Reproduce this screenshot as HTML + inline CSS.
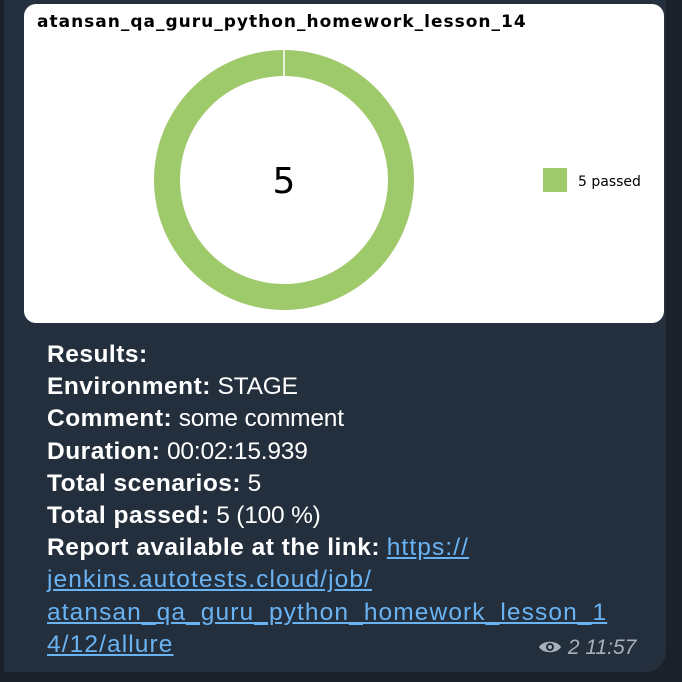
<!DOCTYPE html>
<html><head><style>
body{margin:0;width:682px;height:682px;background:#1a212b;overflow:hidden;font-family:"Liberation Sans",sans-serif}
.bub{position:absolute;left:4px;top:0;width:662px;height:672px;background:#242f3d;border-radius:0 0 20px 0}
.img{position:absolute;left:24px;top:4px;width:640px;height:319px;background:#fff;border-radius:12px;overflow:hidden}
.title{position:absolute;left:13px;top:8px;font-size:17px;font-weight:bold;color:#000;font-family:"DejaVu Sans",sans-serif;letter-spacing:1px}
.txt{position:absolute;left:47px;top:339px;color:#fff;font-size:24.5px;line-height:32.2px;white-space:nowrap;letter-spacing:-0.2px}
b{font-weight:bold;letter-spacing:0.5px}
a{color:#6ab3f3;text-decoration:underline;letter-spacing:1.1px}
.meta{position:absolute;left:538px;top:636px;color:#a5b0bd;font-size:21px;font-style:italic}
</style></head><body>
<div class="bub"></div>
<div class="img">
<div class="title">atansan_qa_guru_python_homework_lesson_14</div>
<svg width="640" height="319" style="position:absolute;left:0;top:0">
<circle cx="260" cy="176" r="117" fill="none" stroke="#9fca6c" stroke-width="26"/>
<line x1="260" y1="46" x2="260" y2="72" stroke="#fff" stroke-width="1.5"/>
<text x="260" y="189" text-anchor="middle" font-size="36" font-family="DejaVu Sans" fill="#000">5</text>
<rect x="519" y="164" width="24" height="24" fill="#9fca6c"/>
<text x="554" y="182" font-size="14" font-family="DejaVu Sans" fill="#000">5 passed</text>
</svg>
</div>
<div class="txt"><b>Results:</b><br><b>Environment:</b> STAGE<br><b>Comment:</b> some comment<br><b>Duration:</b> 00:02:15.939<br><b>Total scenarios:</b> 5<br><b>Total passed:</b> 5 (100 %)<br><b>Report available at the link:</b> <a>https://</a><br><a>jenkins.autotests.cloud/job/</a><br><a>atansan_qa_guru_python_homework_lesson_1</a><br><a>4/12/allure</a></div>
<div class="meta"><svg width="24" height="16" style="vertical-align:-1px"><path d="M1 8C5 1 19 1 23 8C19 15 5 15 1 8Z" fill="#a5b0bd"/><circle cx="12" cy="8" r="4" fill="#242f3d"/><circle cx="12" cy="8" r="2" fill="#a5b0bd"/></svg> 2 11:57</div>
</body></html>
